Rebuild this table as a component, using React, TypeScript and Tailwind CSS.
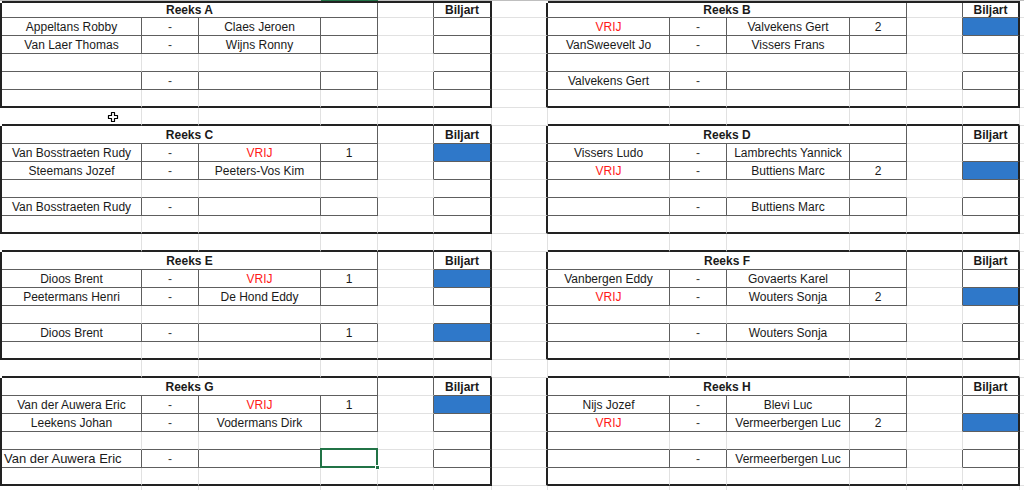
import type { ReactNode } from 'react';

type Match = { a?: string; b?: string; score?: string; blue?: boolean; select?: boolean; wide?: boolean };
type Block = { title: string; matches: [Match, Match, Match] };

// edge styles: every cell draws only its right and bottom edge, like a sheet
const FAINT_R = 'border-r border-r-[#e1e1e1]';
const THIN_R = 'border-r border-r-[#5e5e5e]';
const THICK_R = 'border-r-2 border-r-[#222222]';
const FAINT_B = 'border-b border-b-[#e1e1e1]';
const THIN_B = 'border-b border-b-[#5e5e5e]';
const THICK_B = 'border-b-2 border-b-[#222222]';
const CELL = 'flex items-center justify-center whitespace-nowrap text-[12px] leading-none text-[#1a1a1a]';

const bands: [Block, Block][] = [
  [
    {
      title: 'Reeks A',
      matches: [
        { a: 'Appeltans Robby', b: 'Claes Jeroen' },
        { a: 'Van Laer Thomas', b: 'Wijns Ronny' },
        {},
      ],
    },
    {
      title: 'Reeks B',
      matches: [
        { a: 'VRIJ', b: 'Valvekens Gert', score: '2', blue: true },
        { a: 'VanSweevelt Jo', b: 'Vissers Frans' },
        { a: 'Valvekens Gert' },
      ],
    },
  ],
  [
    {
      title: 'Reeks C',
      matches: [
        { a: 'Van Bosstraeten Rudy', b: 'VRIJ', score: '1', blue: true },
        { a: 'Steemans Jozef', b: 'Peeters-Vos Kim' },
        { a: 'Van Bosstraeten Rudy' },
      ],
    },
    {
      title: 'Reeks D',
      matches: [
        { a: 'Vissers Ludo', b: 'Lambrechts Yannick' },
        { a: 'VRIJ', b: 'Buttiens Marc', score: '2', blue: true },
        { b: 'Buttiens Marc' },
      ],
    },
  ],
  [
    {
      title: 'Reeks E',
      matches: [
        { a: 'Dioos Brent', b: 'VRIJ', score: '1', blue: true },
        { a: 'Peetermans Henri', b: 'De Hond Eddy' },
        { a: 'Dioos Brent', score: '1', blue: true },
      ],
    },
    {
      title: 'Reeks F',
      matches: [
        { a: 'Vanbergen Eddy', b: 'Govaerts Karel' },
        { a: 'VRIJ', b: 'Wouters Sonja', score: '2', blue: true },
        { b: 'Wouters Sonja' },
      ],
    },
  ],
  [
    {
      title: 'Reeks G',
      matches: [
        { a: 'Van der Auwera Eric', b: 'VRIJ', score: '1', blue: true },
        { a: 'Leekens Johan', b: 'Vodermans Dirk' },
        { a: 'Van der Auwera Eric', select: true, wide: true },
      ],
    },
    {
      title: 'Reeks H',
      matches: [
        { a: 'Nijs Jozef', b: 'Blevi Luc' },
        { a: 'VRIJ', b: 'Vermeerbergen Luc', score: '2', blue: true },
        { b: 'Vermeerbergen Luc' },
      ],
    },
  ],
];

function Name({ value }: { value?: string }) {
  if (!value) return null;
  return <span className={value === 'VRIJ' ? 'text-[#ff1a1a]' : ''}>{value}</span>;
}

function blockCells(block: Block, r: number, k: string): ReactNode[] {
  if (r === 0) {
    return [
      <div key={k + 'h'} className={`col-span-4 ${THIN_R} ${THIN_B} ${CELL} font-bold`}>
        {block.title}
      </div>,
      <div key={k + 'e'} className={`${THIN_R} ${FAINT_B}`} />,
      <div key={k + 'f'} className={`${THICK_R} ${THIN_B} ${CELL} font-bold`}>
        Biljart
      </div>,
    ];
  }
  if (r === 3 || r === 5) {
    const bottom = r === 3 ? THIN_B : THICK_B;
    return [
      <div key={k + 0} className={`${FAINT_R} ${bottom}`} />,
      <div key={k + 1} className={`${FAINT_R} ${bottom}`} />,
      <div key={k + 2} className={`${FAINT_R} ${bottom}`} />,
      <div key={k + 3} className={`${FAINT_R} ${bottom}`} />,
      <div key={k + 4} className={`${FAINT_R} ${r === 3 ? FAINT_B : THICK_B}`} />,
      <div key={k + 5} className={`${THICK_R} ${bottom}`} />,
    ];
  }
  const m = block.matches[r === 1 ? 0 : r === 2 ? 1 : 2];
  return [
    <div
      key={k + 0}
      className={`${THIN_R} ${THIN_B} ${CELL} ${m.wide ? 'justify-start pl-[2px] text-[13px]' : ''}`}
    >
      <Name value={m.a} />
    </div>,
    <div key={k + 1} className={`${THIN_R} ${THIN_B} ${CELL} text-[#3a3a3a]`}>
      -
    </div>,
    <div key={k + 2} className={`${THIN_R} ${THIN_B} ${CELL}`}>
      <Name value={m.b} />
    </div>,
    <div key={k + 3} className={`relative ${THIN_R} ${THIN_B} ${CELL}`}>
      {m.score}
      {m.select && (
        <div className="absolute -left-px -top-[2px] -right-px -bottom-px border-2 border-[#217346]">
          <div className="absolute -right-[4px] -bottom-[4px] h-[5px] w-[5px] bg-[#217346] border border-white" />
        </div>
      )}
    </div>,
    <div key={k + 4} className={`${THIN_R} ${FAINT_B}`} />,
    <div key={k + 5} className={`${THICK_R} ${THIN_B} ${m.blue ? 'bg-[#2f78c9]' : ''}`} />,
  ];
}

function LeadRow() {
  const cols = Array.from({ length: 12 }, (_, i) => i);
  return (
    <>
      <div className="border-t border-t-[#bfbfbf]" />
      {cols.slice(0, 6).map((i) => (
        <div
          key={'l' + i}
          className={`border-t ${i === 3 ? 'border-t-[#217346]' : 'border-t-[#bfbfbf]'} ${THICK_B}`}
        />
      ))}
      <div className="border-t border-t-[#bfbfbf]" />
      {cols.slice(6).map((i) => (
        <div key={'l' + i} className={`border-t border-t-[#bfbfbf] ${THICK_B}`} />
      ))}
      <div className="border-t border-t-[#bfbfbf]" />
    </>
  );
}

function SpacerRow({ id, last }: { id: string; last?: boolean }) {
  const cols = Array.from({ length: 6 }, (_, i) => i);
  const bottom = last ? FAINT_B : THICK_B;
  return (
    <>
      <div />
      {cols.map((i) => (
        <div key={id + 'a' + i} className={`${FAINT_R} ${bottom}`} />
      ))}
      <div className={`${FAINT_R} ${FAINT_B}`} />
      {cols.map((i) => (
        <div key={id + 'b' + i} className={`${FAINT_R} ${bottom}`} />
      ))}
      <div className={FAINT_B} />
    </>
  );
}

function Band({ pair, id }: { pair: [Block, Block]; id: string }) {
  const rows = [0, 1, 2, 3, 4, 5];
  return (
    <>
      {rows.map((r) => (
        <div key={id + r} className="contents">
          <div className={THICK_R} />
          {blockCells(pair[0], r, id + r + 'L')}
          <div className={`${THICK_R} ${FAINT_B}`} />
          {blockCells(pair[1], r, id + r + 'R')}
          <div className={FAINT_B} />
        </div>
      ))}
    </>
  );
}

export default function App() {
  return (
    <div className="relative h-[490px] w-[1024px] overflow-hidden bg-white font-['Liberation_Sans',Arial,sans-serif]">
      <div className="grid grid-cols-[2px_140px_57px_122px_57px_56px_58px_56px_122px_57px_123px_57px_56px_57px_1fr] grid-rows-[3px_15px_repeat(27,18px)]">
        <LeadRow />
        {bands.map((pair, i) => (
          <div key={'band' + i} className="contents">
            <Band pair={pair} id={'b' + i} />
            <SpacerRow id={'s' + i} last={i === bands.length - 1} />
          </div>
        ))}
      </div>

      {/* sheet cursor */}
      <svg className="absolute left-[107px] top-[111px]" width="12" height="12" viewBox="0 0 12 12">
        <path
          d="M4.5 1.5h3v3h3v3h-3v3h-3v-3h-3v-3h3z"
          fill="white"
          stroke="black"
          strokeWidth="1.2"
          strokeLinejoin="round"
        />
      </svg>
    </div>
  );
}
